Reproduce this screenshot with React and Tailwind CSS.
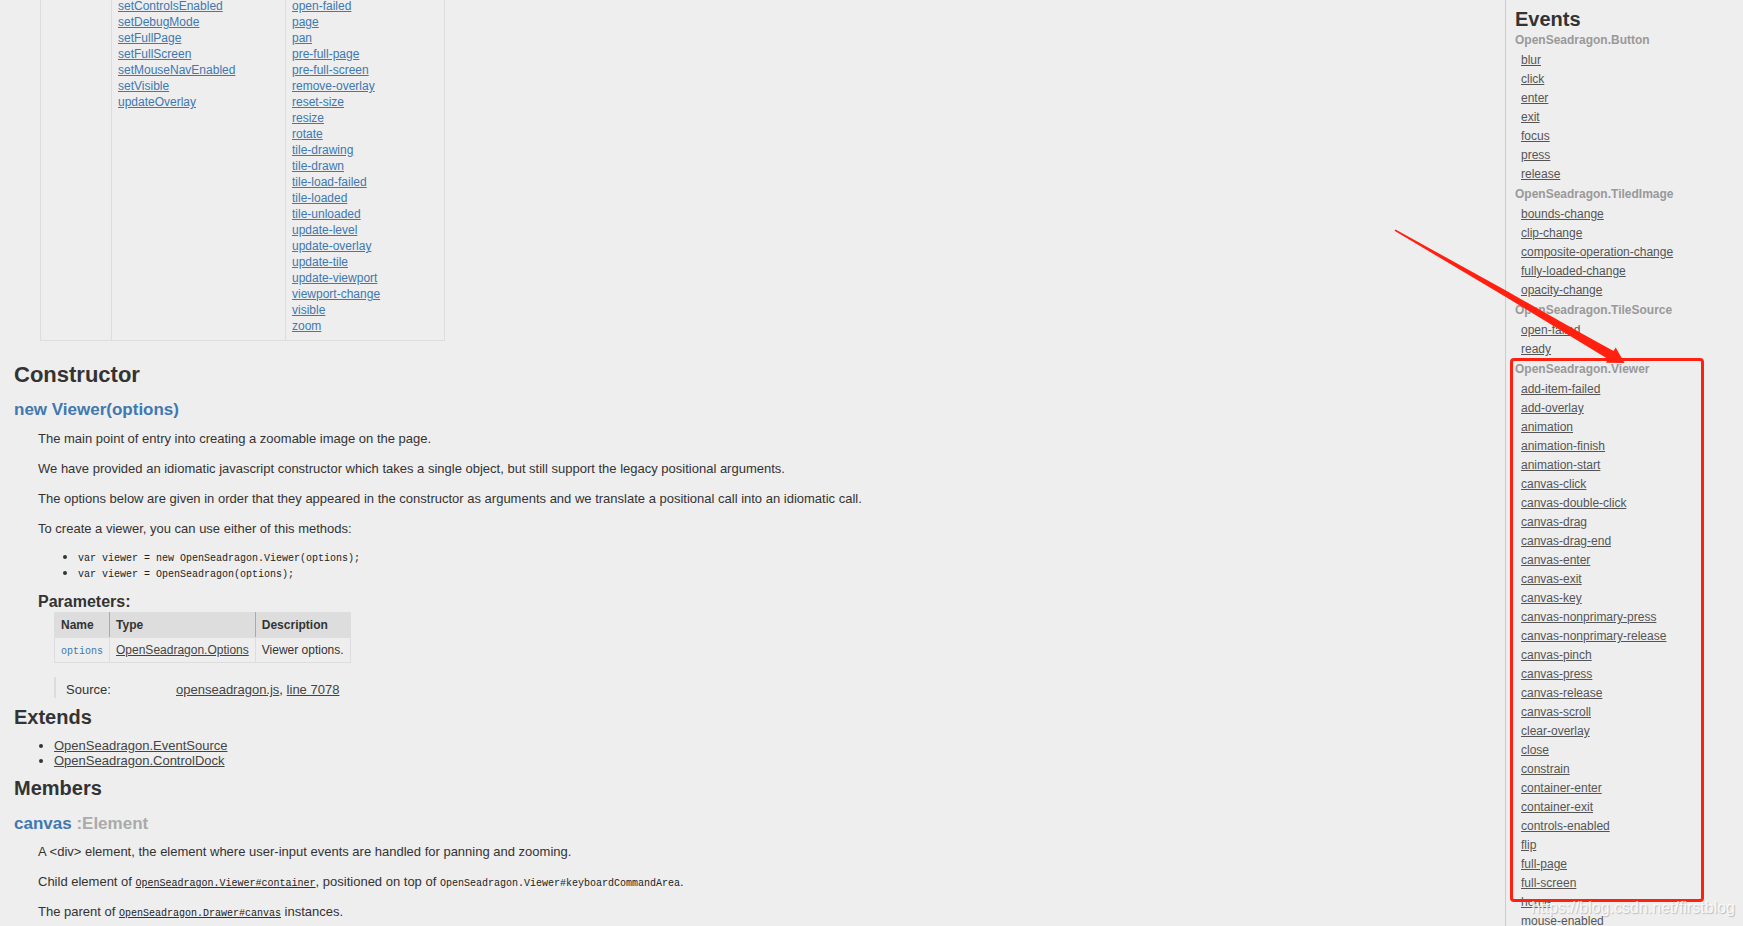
import React from 'react';

const methods = [
  'setControlsEnabled',
  'setDebugMode',
  'setFullPage',
  'setFullScreen',
  'setMouseNavEnabled',
  'setVisible',
  'updateOverlay',
];

const viewerEvents = [
  'open-failed',
  'page',
  'pan',
  'pre-full-page',
  'pre-full-screen',
  'remove-overlay',
  'reset-size',
  'resize',
  'rotate',
  'tile-drawing',
  'tile-drawn',
  'tile-load-failed',
  'tile-loaded',
  'tile-unloaded',
  'update-level',
  'update-overlay',
  'update-tile',
  'update-viewport',
  'viewport-change',
  'visible',
  'zoom',
];

const eventGroups = [
  {
    name: 'OpenSeadragon.Button',
    events: ['blur', 'click', 'enter', 'exit', 'focus', 'press', 'release'],
  },
  {
    name: 'OpenSeadragon.TiledImage',
    events: [
      'bounds-change',
      'clip-change',
      'composite-operation-change',
      'fully-loaded-change',
      'opacity-change',
    ],
  },
  {
    name: 'OpenSeadragon.TileSource',
    events: ['open-failed', 'ready'],
  },
  {
    name: 'OpenSeadragon.Viewer',
    events: [
      'add-item-failed',
      'add-overlay',
      'animation',
      'animation-finish',
      'animation-start',
      'canvas-click',
      'canvas-double-click',
      'canvas-drag',
      'canvas-drag-end',
      'canvas-enter',
      'canvas-exit',
      'canvas-key',
      'canvas-nonprimary-press',
      'canvas-nonprimary-release',
      'canvas-pinch',
      'canvas-press',
      'canvas-release',
      'canvas-scroll',
      'clear-overlay',
      'close',
      'constrain',
      'container-enter',
      'container-exit',
      'controls-enabled',
      'flip',
      'full-page',
      'full-screen',
      'home',
      'mouse-enabled',
    ],
  },
];

const LinkList = ({ items }) => (
  <ul className="text-xs leading-4">
    {items.map((item) => (
      <li key={item}>
        <a href={`#${item}`} className="text-[#4078b0] underline">{item}</a>
      </li>
    ))}
  </ul>
);

const Code = ({ children }) => (
  <code className="font-['Liberation_Mono',monospace] text-[10px] leading-none text-[#222]">{children}</code>
);

const Main = () => (
  <main className="min-w-0 flex-1 pl-[14px]">
    <table className="ml-[26px] -mt-[2px] w-[405px] table-fixed border-collapse">
      <tbody>
        <tr className="align-top">
          <td className="w-[71px] border border-t-0 border-[#ddd]"></td>
          <td className="w-[174px] border border-t-0 border-[#ddd] px-1.5 pb-1.5">
            <LinkList items={methods} />
          </td>
          <td className="border border-t-0 border-[#ddd] px-1.5 pb-1.5">
            <LinkList items={viewerEvents} />
          </td>
        </tr>
      </tbody>
    </table>

    <h2 className="mt-5 text-[22px] leading-7 font-bold">Constructor</h2>
    <h3 className="mt-[9px] text-[17px] leading-6 font-bold text-[#4078b0]">new Viewer(options)</h3>

    <div className="ml-6">
      <div className="mt-[9px] flex flex-col gap-[14px]">
        <p>The main point of entry into creating a zoomable image on the page.</p>
        <p>We have provided an idiomatic javascript constructor which takes a single object, but still support the legacy positional arguments.</p>
        <p>The options below are given in order that they appeared in the constructor as arguments and we translate a positional call into an idiomatic call.</p>
        <p>To create a viewer, you can use either of this methods:</p>
      </div>
      <ul className="mt-3 ml-10 list-disc">
        <li><Code>var viewer = new OpenSeadragon.Viewer(options);</Code></li>
        <li><Code>var viewer = OpenSeadragon(options);</Code></li>
      </ul>

      <h4 className="mt-[11px] text-base leading-5 font-bold">Parameters:</h4>
      <table className="ml-4 border-collapse text-xs">
        <thead>
          <tr className="bg-[#ddd] text-left">
            <th className="border border-[#ddd] border-r-[#aaa] px-1.5 py-1">Name</th>
            <th className="border border-[#ddd] border-r-[#aaa] px-1.5 py-1">Type</th>
            <th className="border border-[#ddd] px-1.5 py-1">Description</th>
          </tr>
        </thead>
        <tbody>
          <tr>
            <td className="border border-[#ddd] px-1.5 py-1">
              <code className="font-['Liberation_Mono',monospace] text-[10px] leading-none text-[#4078b0]">options</code>
            </td>
            <td className="border border-[#ddd] px-1.5 py-1">
              <a href="#options" className="text-[#444] underline">OpenSeadragon.Options</a>
            </td>
            <td className="border border-[#ddd] px-1.5 py-1">Viewer options.</td>
          </tr>
        </tbody>
      </table>

      <dl className="mt-[14px] ml-4 flex border-l-2 border-[#ddd] pt-[5px] pl-2.5">
        <dt className="w-[110px]">Source:</dt>
        <dd>
          <a href="#source" className="text-[#444] underline">openseadragon.js</a>,{' '}
          <a href="#line7078" className="text-[#444] underline">line 7078</a>
        </dd>
      </dl>
    </div>

    <h2 className="mt-[7px] text-xl leading-6 font-bold">Extends</h2>
    <ul className="mt-[9px] ml-10 list-disc leading-[15px]">
      <li><a href="#EventSource" className="text-[#444] underline">OpenSeadragon.EventSource</a></li>
      <li><a href="#ControlDock" className="text-[#444] underline">OpenSeadragon.ControlDock</a></li>
    </ul>

    <h2 className="mt-2 text-xl leading-6 font-bold">Members</h2>
    <h3 className="mt-3 text-[17px] leading-6 font-bold text-[#4078b0]">
      canvas <span className="text-[#aaa]">:Element</span>
    </h3>
    <div className="mt-2 ml-6 flex flex-col gap-[14px]">
      <p>A &lt;div&gt; element, the element where user-input events are handled for panning and zooming.</p>
      <p>
        Child element of <a href="#container" className="underline"><Code>OpenSeadragon.Viewer#container</Code></a>
        , positioned on top of <Code>OpenSeadragon.Viewer#keyboardCommandArea</Code>.
      </p>
      <p>
        The parent of <a href="#canvas" className="underline"><Code>OpenSeadragon.Drawer#canvas</Code></a> instances.
      </p>
    </div>
  </main>
);

const Sidebar = () => (
  <nav className="relative w-[238px] shrink-0 border-l border-[#ccc] pt-[7px] pl-[9px]">
    <h2 className="text-xl leading-6 font-bold">Events</h2>
    {eventGroups.map((group) => (
      <section key={group.name}>
        <h3 className="text-xs leading-[19px] font-bold text-[#999]">{group.name}</h3>
        <ul className="py-px pl-1.5 text-xs leading-[19px]">
          {group.events.map((event) => (
            <li key={event}>
              <a href={`#event:${event}`} className="text-[#555] underline">{event}</a>
            </li>
          ))}
        </ul>
      </section>
    ))}

    {/* callout box and arrow over the Viewer events */}
    <div className="pointer-events-none absolute top-[358px] left-1 h-[544px] w-[194px] rounded border-3 border-[#ff2010]"></div>
    <svg className="pointer-events-none absolute top-[229px] -left-[112px]" width="232" height="136" viewBox="1394 229 232 136">
      <path d="M1395.5 229.5 L1505 290 L1580 332.5 L1613.5 351 L1615.7 347.5 L1624.5 363 L1606 362.8 L1608 359 L1580 342 L1505 296.5 L1394.5 230.8 Z" fill="#ff2010" />
    </svg>
  </nav>
);

const App = () => {
  return (
    <div className="relative flex h-screen overflow-hidden bg-[#eee] font-['Liberation_Sans',Arial,sans-serif] text-[13px] leading-4 text-[#333]">
      <Main />
      <Sidebar />
      <div className="absolute right-2 bottom-2 text-base leading-5 text-white/80 [text-shadow:1px_1px_1px_#bbb]">
        https://blog.csdn.net/firstblog
      </div>
    </div>
  );
};

export default App;
